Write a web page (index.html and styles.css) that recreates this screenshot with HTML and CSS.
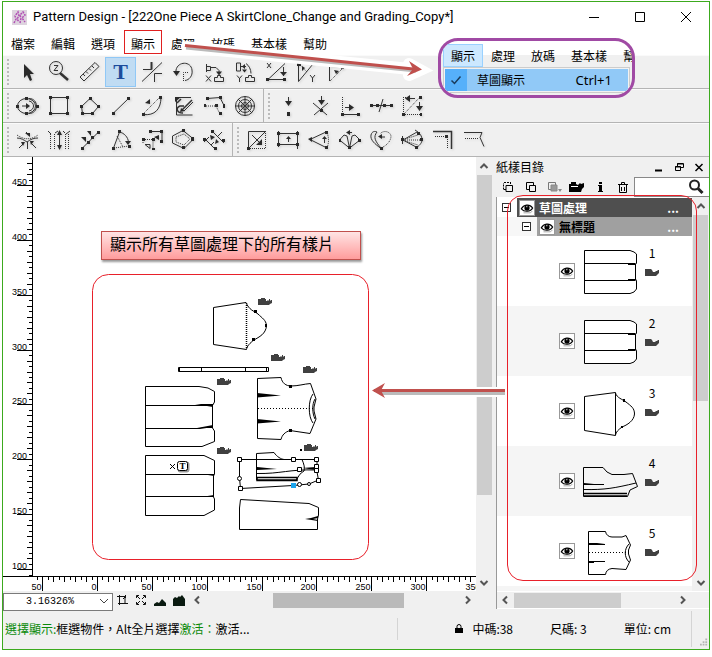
FILE: index.html
```html
<!DOCTYPE html>
<html lang="zh-Hant">
<head>
<meta charset="utf-8">
<title>Pattern Design</title>
<link rel="stylesheet" href="styles.css">
</head>
<body>
<svg class="defs" aria-hidden="true">
  <symbol id="eye" viewBox="0 0 16 16"><path d="M1.500 9C4 4 11 3 14.500 8C12 12.500 5 13 1.500 9z" fill="#fff" stroke="#000" stroke-width="1.300"/><circle cx="8" cy="8" r="3" fill="#000"/><path d="M7 6.500h1.500" stroke="#fff"/><path d="M4 13.500h8l2-2" fill="none" stroke="#999"/></symbol>
  <symbol id="stamp" viewBox="0 0 14 8"><path d="M0 1h6l1 1 1 2h2l1-1 1 0 1-1h1v3l-2 2-1 1H0z" fill="#404040"/></symbol>
  <symbol id="scribble" viewBox="0 0 14 8"><path d="M0 1h3V0h4v1h1v2h1l1-1 1 1V1h1v2l1-1h1v3l-2 1-1 1H0z" fill="#404040"/></symbol>
  <symbol id="skirt" viewBox="0 0 60 70"><path d="M4.500 14.500H50L54 16L56.500 18V27L55.500 28.500V43L56.500 45V53L54 56L50 57.500H4.500zM4.500 27.500H55.500M4.500 44.500H55.500M48 28.500h8M48 43.500h8" fill="#fff" stroke="#000"/></symbol>
  <symbol id="chev-l" viewBox="0 0 10 10"><path d="M7 1.500L3.500 5L7 8.500" fill="none" stroke="#555" stroke-width="2"/></symbol>
  <symbol id="chev-r" viewBox="0 0 10 10"><path d="M3 1.500L6.500 5L3 8.500" fill="none" stroke="#555" stroke-width="2"/></symbol>
  <symbol id="chev-u" viewBox="0 0 10 10"><path d="M1.500 7L5 3.500L8.500 7" fill="none" stroke="#555" stroke-width="2"/></symbol>
  <symbol id="chev-d" viewBox="0 0 10 10"><path d="M1.500 3L5 6.500L8.500 3" fill="none" stroke="#555" stroke-width="2"/></symbol>
</svg>
<div class="window">
  <header class="titlebar">
    <svg class="app-icon" viewBox="0 0 15 15"><rect width="15" height="15" fill="#ddd3de"/><path d="M2 13L4 9L3 6L6 2L7 6L5 9L7 12M8 13L9 8L8 5L11 2L13 5L10 8L13 12" fill="none" stroke="#b04fb4" stroke-width="1.500" stroke-dasharray="2 1"/></svg>
    <h1>Pattern Design - [222One Piece A SkirtClone_Change and Grading_Copy*]</h1>
    <button aria-label="Minimize"><svg viewBox="0 0 12 12"><path d="M1 6.500h10"/></svg></button>
    <button aria-label="Maximize"><svg viewBox="0 0 12 12"><path d="M1.500 1.500h9v9h-9z"/></svg></button>
    <button aria-label="Close"><svg viewBox="0 0 12 12"><path d="M1 1l10 10M11 1L1 11"/></svg></button>
  </header>
  <nav class="menubar">
    <button>檔案</button><button>編輯</button><button>選項</button><button class="marked">顯示</button><button>處理</button><button>放碼</button><button>基本樣</button><button>幫助</button>
  </nav>

  <div class="toolbar">
    <div class="group">
      <button aria-label="Select"><svg viewBox="0 0 24 24"><path class="f" d="M8 4v14l3-3 3 6 2-1-2-6h4z"/></svg></button>
      <button aria-label="Zoom"><svg viewBox="0 0 24 24"><circle cx="9" cy="8" r="6.500"/><path d="M7 5.500h4L7 10.500h4"/><path d="M13 13l8 7" stroke-width="2.500"/></svg></button>
      <button aria-label="Measure"><svg viewBox="0 0 24 24"><path d="M2 17L17 2.500L21 6.500L6 21zM5 14l2 2M8 11.500l2 2M11 8.500l2 2M14 6l2 2"/></svg></button>
      <button class="active" aria-label="Text">T</button>
      <button aria-label="Trim"><svg viewBox="0 0 24 24"><path d="M11.500 2V9.500H3M2 21.500L22 2.500M22 13.500H14.500V22"/><path d="M11.500 2V9.500" stroke-width="2"/></svg></button>
      <button aria-label="Rotate"><svg viewBox="0 0 24 24"><path d="M5 12V10C7 1 20 1 21 10C22 16 18 20 14 20.500"/><path d="M12.500 21V12.500H17" class="d"/><path class="f" d="M2 11h7l-3.500 5z"/></svg></button>
      <button aria-label="Copy X"><svg viewBox="0 0 24 24"><path d="M4.500 4v8M4.500 6.500h4v4h-4M9 7.500h5l3 3v3M4 15.500l5 6M9 15.500l-5 6M12.500 21.500h9v-4h-3v-2h-3v2h-3z"/><path class="f" d="M14 11.500h6l-3 4z"/></svg></button>
      <button aria-label="Copy Y"><svg viewBox="0 0 24 24"><path d="M3.500 3v8h4V3zM8 6.500h5M13 3.500c3 2 5 6 5 10M4 15.500l2.500 3l2.500-3M6.500 18v4M12.500 21.500h9v-4h-3v-2h-3v2h-3z"/><path class="f" d="M9 9.500h5l-2.500 3zM12 4v5l-3-2.500z"/></svg></button>
      <button aria-label="Scale"><svg viewBox="0 0 24 24"><path d="M3 3l4 5M7 3L3 8M4 19.500L21 3.500M2 19.500h19M19.500 7v9"/><path class="f" d="M16 12h7l-3.500 4zM2 18h3v3H2zM19 18h3v3h-3z"/></svg></button>
      <button aria-label="Mirror Y"><svg viewBox="0 0 24 24"><path d="M3.500 4v17.500L18 4"/><path class="d" d="M4 4l8 8"/><path d="M15 15l2.500 3L20 15M17.500 18v4"/><path class="f" d="M2 3h4v3H2zM7 6v5l3-3zM17 3h2v2h-2z"/></svg></button>
      <button aria-label="Shear"><svg viewBox="0 0 24 24"><path d="M3.500 21V6.500L17 7"/><path class="d" d="M4 21L17 8"/><path class="f" d="M15 6h3v3h-3zM8 10l5 1-3 3z"/></svg></button>
    </div>
  </div>
  <div class="toolbar">
    <div class="group">
      <button aria-label="Circle"><svg viewBox="0 0 24 24"><ellipse cx="10.500" cy="12" rx="9" ry="7.500"/><path d="M13 4.500c10 0 10 15 0 15M13 7c6 1 6 9 0 10M6 12h6"/><path class="f" d="M10 9v6l4-3zM0 11h3v3H0zM9 3h3v3H9zM9 18h3v3H9zM20 11h3v3h-3z"/></svg></button>
      <button aria-label="Rectangle"><svg viewBox="0 0 24 24"><path d="M3.500 3.500h17v16h-17z"/><path class="f" d="M2 2h3v3H2zM19 2h3v3h-3zM2 18h3v3H2zM19 18h3v3h-3z"/></svg></button>
      <button aria-label="Polygon"><svg viewBox="0 0 24 24"><path d="M12 4.500L20.500 12.500L14.500 19.500H4.500L3.500 12.500z"/><path class="f" d="M11 3h3v3h-3zM19 11h3v3h-3zM13 18h3v3h-3zM3 18h3v3H3zM2 11h3v3H2z"/></svg></button>
      <button aria-label="Line"><svg viewBox="0 0 24 24"><path d="M4.500 19L19.500 4.500"/><path class="f" d="M3 18h3v3H3zM18 3h3v3h-3z"/></svg></button>
      <button aria-label="Curve"><svg viewBox="0 0 24 24"><path d="M3 20.500C15 22 21 15 21 3"/><path class="d" d="M3 20L20 3"/><path class="f" d="M2 19h3v3H2zM19 2h3v3h-3zM5 9l5-4v5z"/></svg></button>
      <button aria-label="Digitize"><svg viewBox="0 0 24 24"><path d="M5.500 3v18h16M5 3.500h15"/><path d="M6 9L10 5M12 19c-6 0-8-5-3-7h4M11 16L21 6" stroke-width="1.500"/><path d="M13 17L22 8"/><path class="f" d="M4 3h6L4 8zM10 14l4 3-5 1z"/></svg></button>
      <button aria-label="Offset"><svg viewBox="0 0 24 24"><path d="M5 4.500L18 3.500L22 11.500"/><path class="d" d="M2 12h12l4 8"/><path class="f" d="M4 3h3v3H4zM17 2h3v3h-3zM21 10h2v4h-2zM2 10h2v3H2zM13 10h3v3h-3zM17 18h3v3h-3z"/></svg></button>
      <button aria-label="Net"><svg viewBox="0 0 24 24"><circle cx="12" cy="12" r="9.500"/><circle cx="12" cy="12" r="6.500"/><circle cx="12" cy="12" r="3.500"/><path d="M12 2v20M2 12h20M5 5l14 14M19 5L5 19"/></svg></button>
    </div>
    <div class="group">
      <button aria-label="Point"><svg viewBox="0 0 24 24"><path d="M12.500 3v6"/><path class="f" d="M9 7h7l-3.500 5zM11 18h3v4h-3z"/></svg></button>
      <button aria-label="Intersection"><svg viewBox="0 0 24 24"><path d="M14.500 2v6M6 9l14 12M21 9L7 21"/><path class="f" d="M11 6h7l-3.500 5zM13 15h3v3h-3z"/></svg></button>
      <button aria-label="Relative point"><svg viewBox="0 0 24 24"><path class="d" d="M4.500 3v15"/><path d="M4 20.500h17M7 13.500h5"/><path class="f" d="M11 10v7l5-3.500zM3 19h3v3H3zM19 19h3v3h-3z"/></svg></button>
      <button aria-label="Divide"><svg viewBox="0 0 24 24"><path d="M2 11.500h21M10 18l4-13"/><path class="f" d="M1 10h3v3H1zM7 10h3v3H7zM14 10h3v3h-3zM21 10h3v3h-3z"/></svg></button>
      <button aria-label="Swap"><svg viewBox="0 0 24 24"><path class="d" d="M3.500 3v18M3 20.500h18M4 20L20 3M3 3.500h3"/><path d="M9 4.500h6M19.500 8v6"/><path class="f" d="M10 1v7L5 4.500zM16 12h7l-3.500 5zM2 19h3v3H2zM20 19h2v3h-2zM19 2h3v3h-3z"/></svg></button>
    </div>
  </div>
  <div class="toolbar">
    <div class="group">
      <button aria-label="Blend"><svg viewBox="0 0 24 24"><path class="d" d="M1 7c7 5 14 5 21 0"/><path d="M1 10c4 0 7 2 10 4c4-3 7-4 11-4M10 4l3 3M3 20l4-4M20 20l-4-4M11.500 14v7"/><path class="f" d="M9 5h5v4zM5 14h4l-2 4zM14 13h4l-3 4z"/></svg></button>
      <button aria-label="Seam"><svg viewBox="0 0 24 24"><path class="d" d="M3.500 6v16M7.500 6v16M18.500 6v16M21.500 6v16"/><path d="M1 3l3 3M8 5l3-2M23 3l-4 3M12.500 4v16M18 5l-2-2"/><path class="f" d="M10 7l2.500-5L15 7zM10 17l2.500 5L15 17z"/></svg></button>
      <button aria-label="Split"><svg viewBox="0 0 24 24"><path d="M4 20.500L20 4.500"/><path class="f" d="M3 19h3v3H3zM19 3h3v3h-3zM9 13h3v3H9zM13 8h3v3h-3zM9 3l4 0v5zM3 9h5v5z"/></svg></button>
      <button aria-label="Angle"><svg viewBox="0 0 24 24"><path d="M4.500 20L10.500 4C15 5 19 9 19.500 14"/><path class="d" d="M5 20L20 18M8 8l6 11"/><path class="f" d="M9 2h3v3H9zM3 19h3v3H3zM19 17h3v3h-3zM16 13h6l-3 4z"/></svg></button>
      <button aria-label="Move point"><svg viewBox="0 0 24 24"><path d="M9 3.500h13v10"/><path class="d" d="M3 11.500h10v10M3 12v3"/><path d="M5 16.500h5v4z"/><path class="f" d="M9 2h3v3H9zM20 2h3v3h-3zM20 12h3v3h-3zM2 10h3v3H2zM12 10h3v3h-3zM12 20h3v2h-3zM14 9l5-2v5z"/></svg></button>
      <button aria-label="Allowance"><svg viewBox="0 0 24 24"><path d="M1.500 8L12 2.500L22.500 11L13 20.500L1.500 15z"/><path class="d" d="M5 9l8-3l6 5l-6 6l-8-3z"/><path class="f" d="M11 1h3v3h-3zM20 9h3v4h-3zM11 18h3v3h-3z"/></svg></button>
      <button aria-label="Parallel"><svg viewBox="0 0 24 24"><path d="M2 10l12 12M10 3l12 12M2 14l5-5M16 8l4-4M9 17l3-3"/><path class="f" d="M1 10h3v3H1zM9 2h3v3H9zM12 19h3v3h-3zM20 11h3v3h-3zM8 7l5 2-4 3zM14 11l3 3-4 2z"/></svg></button>
    </div>
    <div class="group">
      <button aria-label="Shrink"><svg viewBox="0 0 24 24"><path d="M20.500 3.500h-17V20.500L20.500 3.500M7 7l8 8"/><path class="d" d="M20.500 3v17.500H4"/><path class="f" d="M17 11v6h-6zM2 19h3v3H2z"/></svg></button>
      <button aria-label="Parallel extension"><svg viewBox="0 0 24 24"><path d="M2 5.500h20M2 16.500h20M2.500 3v16M21.500 3v18M12.500 9v5"/><path class="f" d="M1 4h3v3H1zM20 4h3v3h-3zM1 15h3v3H1zM20 15h3v3h-3zM10 11l2.500-3 2.500 3z"/></svg></button>
      <button aria-label="Spread"><svg viewBox="0 0 24 24"><path d="M19 4L3 11.500L20 20M17.500 9v6"/><path class="d" d="M20 5c2 4 2 10 0 15"/><path class="f" d="M1 11l4-2v5zM18 3h3v3h-3zM18 18h3v3h-3zM15 11l2.500-3 2.500 3z"/></svg></button>
      <button aria-label="Fan"><svg viewBox="0 0 24 24"><path d="M11.500 20L1.500 12L6 7L9 8L11.500 20L14 8L17 7L22 12zM9 4.500h5"/><path class="f" d="M10 18h3v3h-3zM12 2v5L8 4.500zM20 11h3v3h-3zM1 11h2v3H1z"/></svg></button>
      <button aria-label="Heart"><svg viewBox="0 0 24 24"><path d="M12 20.500C6 16 1 12 2 7C3 3 6 3 8 4M12 20C6 13 4 9 8 4M12 9h4"/><path class="d" d="M12 20c7-3 10-8 10-12c-1-5-8-6-11-2"/><path class="f" d="M11 19h3v3h-3zM13 6v5L9 8.500z"/></svg></button>
      <button aria-label="Cone"><svg viewBox="0 0 24 24"><path d="M2.500 8v8M3 12L17 4M3 12l15 8M15 2c5 3 7 6 7 10c0 3-3 6-6 8"/><path class="d" d="M3 12h18M5 11l13-4M5 13l13 4"/><path class="f" d="M1 10h3v3H1zM17 4h3v3h-3zM20 10h3v3h-3zM15 18h3v3h-3z"/></svg></button>
      <button aria-label="Corner"><svg viewBox="0 0 24 24"><path d="M2 3.500h18.500V21" stroke-width="1.500"/><path class="d" d="M4 8.500h12M16.500 9V21"/><path class="f" d="M14 7h3v3h-3z"/></svg></button>
      <button aria-label="Notch corner"><svg viewBox="0 0 24 24"><path d="M2 4.500h18l-2 5l4 9"/><path class="d" d="M3 10.500h14"/></svg></button>
    </div>
  </div>

  <main>
    <section class="work">
      <div class="stage">
        <svg class="ruler-v" data-axis="v"></svg>
        <div class="canvas">
          <svg class="pieces" width="442" height="419" viewBox="33 157 442 419">
            <path d="M213.500 307.500L246 302.500C249 310 254 311 258 314C262 318 266 320 266.500 325.500C266 334 259 337 254 340C250 343 247 346 246.500 349.500L213.500 344.500z"/>
            <path d="M246.500 303v46" stroke-width="1.500" stroke-dasharray="1 1"/>
            <path class="k" d="M254 310h3v3h-3zM252 338h3v3h-3zM265 324h2v3h-2z"/>
            <path d="M178.500 367.500h90v4h-90zM179.500 368v3M201.500 368v3M245.500 368v3M266.500 368v3"/>
            <path d="M145.500 386.500H199L208 388L214.500 391.500V402L212.500 405.500V428L214.500 431V441.500L202 446.500H145.500zM145.500 405.500H213M145.500 428.500H200L213 426.500"/>
            <path class="k" d="M195 404l18 0v3zM197 428l16-3v3z"/>
            <path d="M145.500 455.500H204L214.500 460.500V474L213.500 476V497L214.500 499V510L204 515.500H145.500zM145.500 474.500H213M145.500 496.500H213"/>
            <path class="k" d="M202 474h12v2zM201 497h13v-2z"/>
            <path d="M257.500 378.500L281 377.500C282 383 286 386 291 386C298 386 304 384 310.500 383.500L316 399L314 407V411L316 419L310 433.500L290 430.500C285 432 282 435 281 439.500L257.500 438.500zM313 394C308 400 308 417 313 423M315 399C312 404 312 413 315 419"/>
            <path d="M258 408.500h55" stroke-dasharray="1 2"/>
            <path class="k" d="M257 393l24 2.500l-24 2zM257 419l24 2.500l-24 2zM289 385h3v3h-3zM289 429h3v3h-3z"/>
            <path d="M256.500 480V453.500L274 452.500C277 457 281 459 284 459.500M302 459.500C304 464 305 468 304 471C300 473 298 477 296.500 480M257 473.500C280 474 290 469 316 470"/>
            <path d="M257 480.500h40v-3h-40zM257 480h40" stroke-width="1.500"/>
            <path class="k" d="M257 467l20 2l-20 1zM302 468l14-1v3z"/>
            <path d="M239.500 459.500H317V472L318.500 480L309 484L293 485.500L240.500 488.500L239.500 478z"/>
            <path class="h" d="M237.500 457.500h4v4h-4zM291.500 457.500h4v4h-4zM314.500 457.500h4v4h-4zM314.500 464.500h4v4h-4zM314.500 468.500h4v4h-4zM297.500 467.500h4v4h-4zM316.500 478.500h4v4h-4zM238.500 486.500h4v4h-4z"/>
            <circle class="h" cx="239.500" cy="478.500" r="2"/><circle class="h" cx="299.500" cy="484.500" r="2"/><circle class="h" cx="309" cy="484" r="1.500"/>
            <path d="M291 483h5v5h-5z" class="sel"/>
            <path d="M239.500 529.500V508L240.500 499.500L309 503.500L318.500 507.500V515L317.500 519V529.500z"/>
            <path class="k" d="M305 519l6-1 7-2v2l-5 1 5 1v1z"/>
            <path d="M170 464l5 5M175 464l-5 5"/><rect x="178" y="462" width="11" height="10" rx="2" fill="#999" stroke="#999"/><rect x="177.500" y="461.500" width="10" height="9" rx="2" fill="#fff"/><text x="182.500" y="469" text-anchor="middle">T</text>
            <rect class="k" x="300" y="449" width="2" height="2"/>
            <use href="#scribble" x="258" y="298" width="14" height="8"/><use href="#scribble" x="271" y="354" width="14" height="8"/><use href="#scribble" x="303" y="366" width="14" height="8"/><use href="#scribble" x="217" y="378" width="14" height="8"/><use href="#scribble" x="217" y="447" width="14" height="8"/><use href="#scribble" x="304" y="444" width="14" height="8"/>
            <rect class="outline" x="92.500" y="274.500" width="276" height="285" rx="16"/>
          </svg>
          <p class="callout">顯示所有草圖處理下的所有樣片</p>
        </div>
        <svg class="ruler-h" data-axis="h"></svg>
      </div>
      <div class="scroll-v"><svg><use href="#chev-u"/></svg><i></i><svg><use href="#chev-d"/></svg></div>
      <div class="zoombar">
        <div class="combo"><select aria-label="Zoom level"><option>3.16326%</option></select><svg viewBox="0 0 10 10"><path d="M1 3l4 4l4-4" fill="none" stroke="#444"/></svg></div>
        <button aria-label="Zoom box"><svg viewBox="0 0 12 12"><path d="M3.500 1v10M1 2.500h8v7M2 9.500h10M9.500 1v3M7 5l2-2"/></svg></button>
        <button aria-label="Fit"><svg viewBox="0 0 12 12"><path d="M1.500 4V1.500H4M8 1.500h2.500V4M10.500 8v2.500H8M4 10.500H1.500V8M2 2l3 3M10 2L7 5M2 10l3-3M10 10L7 7"/></svg></button>
        <button aria-label="Small view"><svg viewBox="0 0 12 12"><path class="hill" d="M0 12V10l3-2 2 1 3-4 4 4v3z"/></svg></button>
        <button aria-label="Large view"><svg viewBox="0 0 12 12"><path class="hill" d="M0 12V5l2-2 2 1 2-2 1 1 2-2 3 4v7z"/></svg></button>
        <div class="scroll-h"><svg><use href="#chev-l"/></svg><i></i><svg><use href="#chev-r"/></svg></div>
      </div>
    </section>

    <aside class="panel">
      <div class="panel-title"><h2>紙樣目錄</h2>
        <button aria-label="Minimize panel"><svg viewBox="0 0 10 10"><path d="M1 8.500h7" stroke-width="2"/></svg></button>
        <button aria-label="Float panel"><svg viewBox="0 0 10 10"><path d="M3.500 4V1.500h6v4H7M1.500 4.500h5v4h-5zM1 5h6M3 2h6" /></svg></button>
        <button aria-label="Close panel"><svg viewBox="0 0 10 10"><path d="M1.500 2l7 7M8.500 2l-7 7" stroke-width="1.500"/></svg></button>
      </div>
      <div class="panel-tools">
        <button aria-label="New"><svg viewBox="0 0 16 16"><path d="M6 6.500h6.500v6H6z"/><path d="M3.500 10.500V4M4 3.500h7M10.500 3v3M4 10.500h2" stroke-dasharray="2 1"/></svg></button>
        <button aria-label="Duplicate"><svg viewBox="0 0 16 16"><path d="M3.500 10.500v-7h7v3M6.500 6.500h6v6h-6zM3.500 10.500h3"/></svg></button>
        <button aria-label="Paste"><svg viewBox="0 0 16 16"><path d="M2.500 10.500v-7h7v7z" stroke="#777"/><path d="M5 6h6v6H5z" fill="#999" stroke="#888"/><path d="M12 10h4l-2 3z" fill="#888" stroke="none"/></svg></button>
        <button aria-label="Open"><svg viewBox="0 0 16 16"><path d="M0 13V5h2V3h5v2l2 1 2-2 1 1 3-1v4l-2 2-1 3z" fill="#000" stroke="none"/><path d="M2 7.500h7" stroke="#fff"/></svg></button>
        <button aria-label="Info"><svg viewBox="0 0 16 16"><path d="M7 3h3v2H7zM6 6h4v6h1v1H6v-1h1V7H6z" fill="#000" stroke="none"/></svg></button>
        <button aria-label="Delete"><svg viewBox="0 0 16 16"><path d="M3 5.500h10M4.500 6v7.500h7V6M6.500 5V3.500h3V5M6.500 8v4M9.500 8v4"/></svg></button>
        <label class="search"><input type="search" aria-label="Search"><svg viewBox="0 0 16 16"><circle cx="6.500" cy="6" r="4.500" fill="none" stroke="#222" stroke-width="2"/><path d="M10 9.500l4.500 4.500" stroke="#222" stroke-width="3"/></svg></label>
      </div>
      <div class="tree">
        <div class="list">
          <div class="node top"><button class="fold" aria-label="Collapse"></button><div class="bar"><button class="eye" aria-label="Show"><svg><use href="#eye"/></svg></button><b>草圖處理</b><span>...</span></div></div>
          <div class="node sub"><button class="fold" aria-label="Collapse"></button><div class="bar"><button class="eye" aria-label="Show"><svg><use href="#eye"/></svg></button><b>無標題</b><span>...</span></div></div>
          <ul>
            <li><button class="eye" aria-label="Show"><svg><use href="#eye"/></svg></button><svg class="thumb"><use href="#skirt"/></svg><div class="meta">1<svg><use href="#stamp"/></svg></div></li>
            <li><button class="eye" aria-label="Show"><svg><use href="#eye"/></svg></button><svg class="thumb"><use href="#skirt"/></svg><div class="meta">2<svg><use href="#stamp"/></svg></div></li>
            <li><button class="eye" aria-label="Show"><svg><use href="#eye"/></svg></button><svg class="thumb" viewBox="0 0 60 70"><path d="M4.500 20.500L35.500 16.500V59.500L4.500 54.500zM35.500 17C37 22 42 23 46 26C51 30 54.500 32 54.500 38C54 45 47 49 42 51C38 54 36 56 35.500 59"/><path class="k" d="M43 23h2v3h-2zM41 50h2v2h-2z"/></svg><div class="meta">3<svg><use href="#stamp"/></svg></div></li>
            <li><button class="eye" aria-label="Show"><svg><use href="#eye"/></svg></button><svg class="thumb" viewBox="0 0 60 70"><path d="M3.500 21.500H23L27 26L32 28.500H44L52.500 27.500L57.500 40.500L50 44L47.500 50.500H3.500zM3.500 43.500C25 44 35 42 56 37M4 38.500h20M4 37.500l10 1"/><path d="M4 47.500h43M4 50h43" stroke-width="1.500"/></svg><div class="meta">4<svg><use href="#stamp"/></svg></div></li>
            <li><button class="eye" aria-label="Show"><svg><use href="#eye"/></svg></button><svg class="thumb" viewBox="0 0 60 70"><path d="M8.500 15.500H25.500C26 19 29 21 32 21H42L46 19.500L50.500 29L48.500 34V38L50.500 44L46 53.500L32 52.500C28 53 26 55 25.500 58.500H8.500zM49 28C44 33 44 41 49 46M9 27.500h8l8 1M9 28.500h16M9 45.500h16M9 46.500h5"/><path d="M9 36.500h37" stroke-dasharray="1 2"/></svg><div class="meta">5<svg><use href="#stamp"/></svg></div></li>
          </ul>
        </div>
        <div class="scroll-v"><svg><use href="#chev-u"/></svg><i></i><svg><use href="#chev-d"/></svg></div>
        <div class="scroll-h"><svg><use href="#chev-l"/></svg><i></i><svg><use href="#chev-r"/></svg></div>
      </div>
      <div class="panel-outline"></div>
    </aside>
  </main>

  <footer class="status">
    <p><em>選擇顯示:</em>框選物件，Alt全片選擇<em>激活：</em>激活...</p>
    <div class="figures">
      <svg viewBox="0 0 8 10"><path d="M2 5V2.500a2 2 0 0 1 4 0V5" fill="none" stroke="#000"/><path d="M0 4h8v5H0z"/></svg>
      <span>中碼:38</span><span>尺碼: 3</span><span>單位: cm</span>
    </div>
    <svg class="grip" viewBox="0 0 9 9"><path d="M6 0h2v2H6zM3 3h2v2H3zM6 3h2v2H6zM0 6h2v2H0zM3 6h2v2H3zM6 6h2v2H6z" fill="#b5b5b5"/></svg>
  </footer>

  <svg class="arrows" width="706" height="647" viewBox="3 2 706 647" aria-hidden="true">
    <path d="M187 47L300 58L420 70M409 64L420 70L409 75" fill="none" stroke="#fff" stroke-width="12" stroke-linecap="round"/>
    <path d="M380 392H505" fill="none" stroke="#fff" stroke-width="10"/>
    <g fill="none" stroke="#bbb" stroke-width="3"><path d="M186 48L416 71"/><path d="M380 393.500H505"/></g>
    <g fill="none" stroke="#c0504d" stroke-width="3"><path d="M185 45.500L418 69.500"/><path d="M374 390.500H505"/></g>
    <path d="M409 61L422 69.500L407 76L413 69zM385 383L372 390.500L385 398L381 390.500z" fill="#c0504d"/>
  </svg>

  <div class="popup">
    <div class="popup-bar"><button class="open">顯示</button><button>處理</button><button>放碼</button><button>基本樣</button><button>幫助</button></div>
    <div class="dropdown"><button><svg viewBox="0 0 12 12"><path d="M1.500 6.500L4.500 9.500L10.500 2.500" fill="none" stroke="#1a3c5c" stroke-width="1.500"/></svg><span>草圖顯示</span><kbd>Ctrl+1</kbd></button></div>
  </div>
</div>
<script src="script.js"></script>
</body>
</html>
```

FILE: styles.css
```css
* { box-sizing: border-box; }
body {
  margin: 0;
  padding: 1px 2px 7px;
  min-height: 100vh;
  display: flex;
  background: #fff;
  color: #000;
  font: 12px/16px "Noto Sans CJK TC", "Noto Sans", sans-serif;
}
button { border: 0; padding: 0; background: none; font: inherit; color: inherit; display: grid; place-items: center; }
h1, h2, p, ul { margin: 0; padding: 0; font: inherit; }
svg { display: block; }
.defs { position: absolute; width: 0; height: 0; }
.window { position: relative; flex: 1; display: flex; flex-direction: column; border: 1px solid #3caa1e; background: #f0f0f0; overflow: hidden; }

.titlebar { display: flex; align-items: center; height: 30px; padding-left: 9px; background: #fff; }
.app-icon { width: 15px; height: 15px; margin-right: 6px; }
.titlebar h1 { flex: 1; font-family: Roboto, sans-serif; font-size: 13px; white-space: nowrap; }
.titlebar button { width: 46px; height: 30px; }
.titlebar button svg { width: 12px; height: 12px; stroke: #000; fill: none; }

.menubar { display: flex; height: 23px; background: #fff; }
.menubar button { padding: 0 8px; white-space: nowrap; }
.menubar .marked { height: 24px; margin: -2px 1px 0; padding: 3px 6px 0; border: 1px solid #e02020; }

.toolbar { display: flex; height: 34px; border-bottom: 1px solid #b4b4b4; box-shadow: inset 0 1px #fafafa; }
.group { display: flex; align-items: center; padding: 0 3px 0 9px; position: relative; }
.group + .group { border-left: 1px solid #b4b4b4; padding-left: 8px; }
.group::before { content: ""; position: absolute; left: 4px; top: 4px; bottom: 3px; width: 2px; background: repeating-linear-gradient(#bbb 0 2px, transparent 2px 4px); }
.group button { width: 31px; height: 30px; }
.group svg { width: 24px; height: 24px; fill: none; stroke: #333; filter: drop-shadow(1px 1px 1px #ccc); }
.group .f { fill: #2a2a2a; stroke: none; }
.group .d { stroke-dasharray: 1 1; }
.group .active { background: #c0dcf3; border: 1px solid #90c8f6; color: #1c4c9c; font: bold 22px/28px "Liberation Serif", serif; }

main { flex: 1; display: flex; }
.work { flex: 1; display: grid; grid-template: 1fr 18px / 1fr 16px; min-width: 0; }
.stage { display: grid; grid-template: 1fr 15px / 30px 1fr; background: #fff; min-width: 0; }
.ruler-v { width: 30px; height: 100%; grid-row: 1; grid-column: 1; }
.ruler-h { width: 100%; height: 15px; grid-row: 2; grid-column: 1 / 3; }
.stage text { font: 9px "Liberation Sans", sans-serif; text-anchor: end; }
.canvas { position: relative; overflow: hidden; min-width: 0; }
.pieces { position: absolute; left: 0; top: 0; fill: none; stroke: #000; }
.pieces .k { fill: #000; stroke: none; }
.pieces .h { fill: #fff; }
.pieces .sel { fill: #1ca4ec; stroke: none; }
.pieces .outline { stroke: #e8202a; }
.pieces use { stroke: none; }
.pieces text { font: bold 9px "Liberation Serif", serif; fill: #000; stroke: none; text-anchor: middle; }
.callout { position: absolute; left: 68px; top: 74px; padding: 0 26px 4px 8px; font-size: 16px; line-height: 23px; white-space: nowrap; border: 1px solid #c0504d; background: linear-gradient(#ffe4e4, #ff9c9c); box-shadow: 1px 2px 2px #999; }

.scroll-v { display: flex; flex-direction: column; align-items: center; padding: 4px 0 3px; }
.scroll-v svg, .scroll-h svg { width: 10px; height: 10px; flex: none; }
.scroll-v i { width: 15px; flex: 0 0 75%; margin: 4px 0 auto; background: #cdcdcd; }
.scroll-h { display: flex; align-items: center; }
.scroll-h i { height: 15px; }

.zoombar { grid-column: 1 / 3; display: flex; align-items: center; }
.combo { position: relative; width: 110px; height: 18px; }
.combo select { appearance: none; width: 100%; height: 18px; padding: 0 0 0 22px; border: 1px solid #7a7a7a; border-radius: 0; background: #fff; color: #000; font: 10px/14px "Liberation Mono", monospace; }
.combo svg { position: absolute; right: 4px; top: 5px; width: 10px; height: 10px; }
.zoombar button { width: 12px; margin-left: 7px; }
.zoombar button svg { width: 12px; height: 12px; fill: none; stroke: #111; }
.zoombar .hill { fill: #0a1a10; stroke: none; }
.zoombar .combo + button { margin-left: 3px; }
.zoombar .scroll-h { flex: 1; margin-left: 7px; padding-right: 19px; }
.zoombar .scroll-h i { flex: 0 0 131px; margin: 0 auto 0 71px; background: #bababa; }

.panel { position: relative; flex: 0 0 217px; padding-left: 4px; display: flex; flex-direction: column; }
.panel-title { display: flex; align-items: center; height: 20px; }
.panel-title h2 { flex: 1; }
.panel-title button { width: 20px; }
.panel-title svg { width: 10px; height: 10px; fill: none; stroke: #000; }
.panel-tools { display: flex; align-items: center; height: 20px; }
.panel-tools button { width: 23px; flex: none; }
.panel-tools button svg { width: 16px; height: 16px; fill: none; stroke: #000; }
.search { position: relative; flex: 1; min-width: 0; height: 20px; }
.search input { width: 100%; height: 20px; border: 1px solid #888; border-right: 0; padding: 0 24px 0 4px; background: #fff; }
.search svg { position: absolute; right: 5px; top: 2px; width: 16px; height: 16px; }

.tree { flex: 1; display: grid; grid-template: 1fr 18px / 1fr 17px; border-left: 1px solid #999; }
.list { background: linear-gradient(#fff 0 80%, #f5f5f5 0); }
.node { display: flex; align-items: center; height: 19px; padding-left: 5px; background: #f7f7f7; }
.top { margin-top: 1px; background: #fff; }
.sub { padding-left: 25px; }
.fold { width: 9px; height: 9px; margin-right: 6px; border: 1px solid #333; background: linear-gradient(#000, #000) center / 5px 1px no-repeat #fff; flex: none; }
.bar { flex: 1; display: flex; align-items: center; height: 19px; padding: 0 13px 0 2px; color: #fff; background: #4f4f4f; }
.bar b { flex: 1; margin-left: 4px; }
.bar span { font-weight: bold; }
.sub .bar { background: #a0a0a0; }
.sub .bar b { color: #000; }
.eye { width: 16px; height: 16px; background: #fff; border: 1px solid #999; flex: none; }
.eye svg { width: 14px; height: 14px; }
ul { list-style: none; }
li { display: flex; align-items: center; height: 70px; padding-left: 62px; background: #fff; }
li:nth-child(even) { background: #f5f5f5; }
.thumb { width: 60px; height: 70px; margin: 0 5px; fill: none; stroke: #000; }
.thumb .k { fill: #000; stroke: none; }
.meta { width: 14px; height: 52px; text-align: center; }
.meta svg { width: 14px; height: 8px; margin-top: 7px; }
.tree .scroll-v i { width: 15px; flex: 0 0 186px; }
.tree .scroll-h { grid-column: 1 / 3; padding: 0 21px 0 3px; border-top: 1px solid #fff; border-bottom: 1px solid #fff; }
.tree .scroll-h i { flex: 0 0 107px; margin: 0 auto 0 4px; background: #cdcdcd; }
.panel-outline { position: absolute; left: 15px; right: 12px; top: 38px; bottom: 28px; border: 1px solid #e8202a; border-radius: 16px; pointer-events: none; }

.status { display: flex; align-items: center; height: 40px; padding-left: 2px; }
.status p { flex: 1; white-space: nowrap; }
.status em { font-style: normal; color: #0a8a0a; }
.figures { display: flex; align-items: center; border-left: 1px solid #d4d4d4; height: 22px; padding-left: 57px; }
.figures svg { width: 8px; height: 10px; margin-right: 9px; }
.figures span { margin-right: 37px; white-space: nowrap; }
.figures span:last-child { margin-right: 20px; }
.grip { align-self: stretch; width: 18px; height: 36px; margin-top: 2px; padding: 27px 1px 0 8px; border-left: 1px solid #d4d4d4; }

.arrows { position: absolute; left: 0; top: 0; pointer-events: none; }
.popup { position: absolute; left: 435px; top: 36px; width: 197px; height: 60px; overflow: hidden; border: 3px solid #a04aa4; border-radius: 20px; background: linear-gradient(#fff 14px, #f0f0f0 14px); }
.popup-bar { display: flex; margin: 3px 0 0 2px; }
.popup-bar button { height: 23px; padding: 0 8px; white-space: nowrap; }
.popup-bar .open { background: #cce8ff; border: 1px solid #99d1ff; padding: 0 7px; }
.dropdown { width: 187px; margin: 0 0 0 2px; padding: 1px; border: 1px solid #ccc; background: #f2f2f2; }
.dropdown button { display: flex; align-items: center; width: 100%; height: 22px; padding-right: 16px; background: #91c9f7; }
.dropdown svg { width: 22px; height: 22px; padding: 5px; background: #56b0fa; }
.dropdown span { margin: 0 auto 0 10px; }
.dropdown kbd { font: 13px "Noto Sans", sans-serif; }
```

FILE: script.js
```js
// Draws both rulers: a short tick every 5 units, a longer one every 10, a label every 50.
const STEP = 5.486;
const NS = "http://www.w3.org/2000/svg";

function line(svg, x1, y1, x2, y2) {
  const el = document.createElementNS(NS, "path");
  el.setAttribute("d", `M${x1} ${y1}L${x2} ${y2}`);
  el.setAttribute("stroke", "#000");
  svg.append(el);
}

function label(svg, x, y, value) {
  const el = document.createElementNS(NS, "text");
  el.setAttribute("x", x);
  el.setAttribute("y", y);
  el.textContent = value;
  svg.append(el);
}

document.querySelectorAll("[data-axis]").forEach((svg) => {
  const { width, height } = svg.getBoundingClientRect();
  if (svg.dataset.axis === "v") {
    line(svg, 29.5, 0, 29.5, height);
    for (let i = -4; ; i++) {
      const y = Math.round(28 + i * STEP) + 0.5;
      if (y > height) break;
      line(svg, i % 10 === 0 ? 14 : i % 2 === 0 ? 24 : 26, y, 30, y);
      if (i % 10 === 0) label(svg, 24, y - 1, 450 - i * 5);
    }
  } else {
    line(svg, 0, 0.5, width, 0.5);
    for (let i = -11; ; i++) {
      const x = Math.round(94 + i * STEP) + 0.5;
      if (x > width + 20) break;
      if (x < 29) continue;
      line(svg, x, 0, x, i % 10 === 0 ? 15 : i % 2 === 0 ? 6 : 4);
      if (i % 10 === 0) label(svg, x - 1, 14, Math.abs(i * 5));
    }
  }
});
```
